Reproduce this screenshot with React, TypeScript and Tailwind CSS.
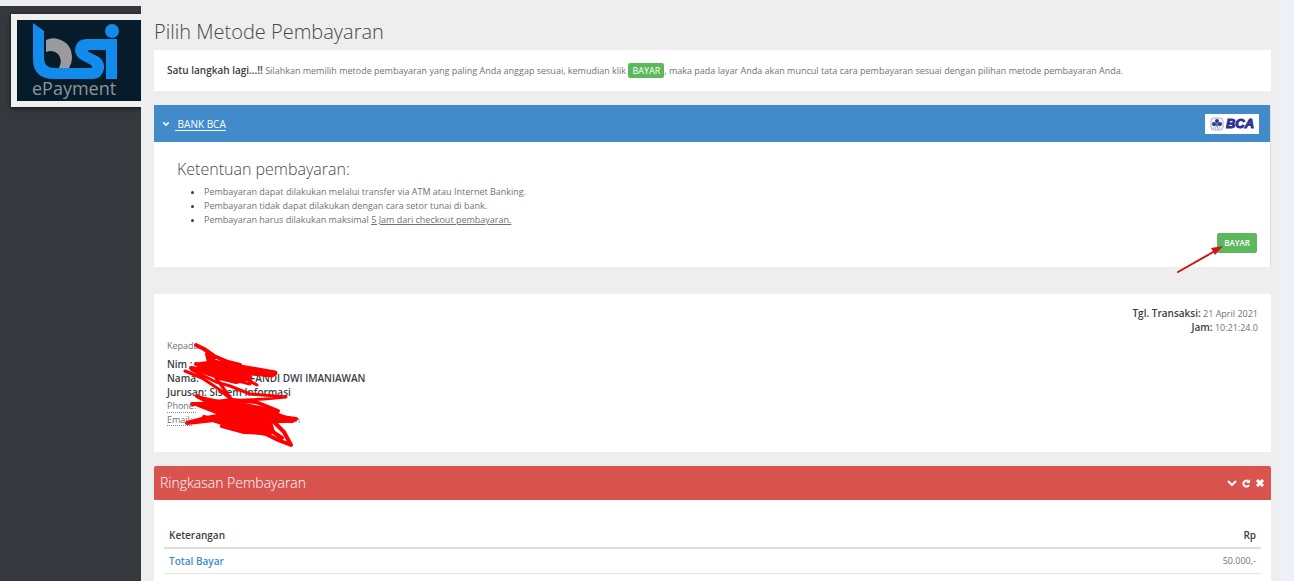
import React from 'react';
import { FaAngleDown } from 'react-icons/fa';

interface PaymentRow {
    label: string;
    amount: string;
}

const rules: { text: string; highlight?: string }[] = [
    { text: 'Pembayaran dapat dilakukan melalui transfer via ATM atau Internet Banking.' },
    { text: 'Pembayaran tidak dapat dilakukan dengan cara setor tunai di bank.' },
    { text: 'Pembayaran harus dilakukan maksimal ', highlight: '5 Jam dari checkout pembayaran.' },
];

const rows: PaymentRow[] = [{ label: 'Total Bayar', amount: '50.000,-' }];

const BsiLogo: React.FC = () => (
    <svg viewBox="0 0 124 81" className="block h-[81px] w-[124px] shrink-0 bg-[#061c2a]" role="img" aria-label="bsi ePayment">
        <path d="M29 20 Q35 17 41 19 Q55 23 55 38 Q55 43 52 48 H42 Q46 40 41 34 Q36 29 29 32Z" fill="#9b9b9d" />
        <path d="M16 3 L27 11 V38 Q27 48 38 48 H73 Q77 48 74 45 L63 39 Q58 35 58 30 Q59 19 70 19 H100 V59 H89 V30 H73 Q69 30 72 32 L82 37 Q88 42 87 49 Q85 59 75 59 H37 Q16 59 16 39Z" fill="#118bec" />
        <circle cx="95" cy="11" r="7" fill="#118bec" />
        <text x="15" y="75" fontSize="18" fontWeight="400" fontFamily="'Open Sans', sans-serif" fill="#8f9498">ePayment</text>
    </svg>
);

const BcaLogo: React.FC = () => (
    <span className="flex h-5 w-[54px] items-center justify-center gap-[2px] bg-white">
        <svg viewBox="0 0 14 14" className="h-[14px] w-[14px]" aria-hidden="true">
            <rect x="1" y="1" width="12" height="12" rx="3" fill="#f4f6fc" stroke="#a3aed8" />
            <circle cx="7" cy="4" r="2" fill="#2b3990" />
            <circle cx="4" cy="7" r="2" fill="#2b3990" />
            <circle cx="10" cy="7" r="2" fill="#2b3990" />
            <path d="M7 5V10M4 9L7 7L10 9" stroke="#2b3990" strokeWidth="1" fill="none" />
            <path d="M3 11H11" stroke="#7b88c0" strokeDasharray="1 1" />
        </svg>
        <span className="font-['Liberation_Sans',sans-serif] text-[13px] leading-none font-bold text-[#2b2f92] italic [-webkit-text-stroke:1px_#2b2f92]">BCA</span>
    </span>
);

const Scribble: React.FC = () => (
    <svg
        viewBox="0 0 140 110"
        className="pointer-events-none absolute top-[46px] left-[26px] h-[110px] w-[140px]"
        fill="none"
        stroke="#fe0000"
        strokeWidth="4"
        strokeLinecap="round"
        strokeLinejoin="round"
        aria-hidden="true"
    >
        <path d="M16 5 L24 9 L34 16 L48 22 L60 25 L40 27 L27 14 L29 22 L46 29 L16 24 L34 31 L11 28 L30 34 L50 36" />
        <path d="M54 26 L72 29 L95 33 L92 35 L72 33 L52 31" strokeWidth="5" />
        <path d="M5 31 L22 38 L40 50 L52 60 M12 30 L36 42 L50 46 L70 54 L106 57 L84 59 L66 60 L42 62 L18 57" strokeWidth="3" />
        <path d="M36 38 L52 60 M58 30 L68 40 L77 45 M40 38 L62 42 L70 44" strokeWidth="3" />
        <path d="M20 24 L36 22 L62 27 L70 38 L56 42 L40 38 L24 32Z" fill="#fe0000" />
        <path d="M17 56 L26 61 L44 65 M12 64 L34 64 L56 66 L80 70 L98 71 L76 62 L52 60 L36 62 L46 70 L18 65 L36 72 L66 76" />
        <path d="M60 72 L94 76 L116 79 L112 81 L84 80 L62 82 L34 80 L7 83 L26 78 L50 74 M24 77 L48 85 L72 88 L90 93 L64 92 L42 86" />
        <path d="M46 80 L64 90 L86 94 L98 100 L111 105 L104 92 L92 80 L68 74 M84 86 L102 98" />
        <path d="M36 64 L60 64 L84 69 L96 74 L112 80 L90 82 L93 92 L78 92 L56 84 L40 78 L50 72Z" fill="#fe0000" />
    </svg>
);

const Arrow: React.FC = () => (
    <svg viewBox="0 0 50 32" className="pointer-events-none absolute right-[45px] bottom-[-7px] h-8 w-[50px]" aria-hidden="true">
        <path d="M3 30L40 9" stroke="#d01316" strokeWidth="2" strokeLinecap="round" />
        <path d="M48 4L40 13L36 6Z" fill="#d01316" />
    </svg>
);

const iconProps = {
    viewBox: '0 0 10 10',
    className: 'block h-[10px] w-[10px]',
    fill: 'none',
    stroke: 'currentColor',
    strokeWidth: 2,
};

export default function App() {
    return (
        <div className="flex min-h-screen bg-[#eeeeee] font-['Open_Sans',sans-serif] text-[9px] leading-[14px] font-normal text-[#707376]">
            <aside className="mt-[6px] w-[141px] shrink-0 overflow-hidden bg-[#35393d] pt-2 pl-[11px]">
                <a href="#" className="flex w-[136px] border-6 border-[#f0f0f0] shadow-[0_1px_4px_#111]">
                    <BsiLogo />
                </a>
            </aside>

            <main className="flex min-w-0 flex-1 flex-col pt-[18px] pr-2 pl-[13px]">
                <h1 className="mb-1 text-[20px] leading-7 font-light text-[#45494d]">Pilih Metode Pembayaran</h1>

                <section className="mb-[14px] bg-white px-[13px] py-[13px]">
                    <p className="leading-[15px]">
                        <strong className="text-[10px] leading-none font-semibold text-[#3a3e42]">Satu langkah lagi...!!</strong> Silahkan memilih metode pembayaran yang paling Anda anggap sesuai, kemudian klik{' '}
                        <span className="inline-block rounded-xs bg-[#5cb85c] px-1 text-white">BAYAR</span>, maka pada layar Anda akan muncul tata cara pembayaran sesuai dengan pilihan metode pembayaran Anda.
                    </p>
                </section>

                {/* Metode pembayaran */}
                <section className="relative mb-[27px] border-r border-[#dddddd] bg-white">
                    <header className="flex h-[37px] items-center justify-between bg-[#428bca] pr-[11px] pl-[7px] text-white">
                        <a href="#bca" className="flex items-center gap-1 text-[10px]">
                            <FaAngleDown className="h-[10px] w-[10px]" />
                            <span className="whitespace-pre underline underline-offset-2"> BANK BCA</span>
                        </a>
                        <BcaLogo />
                    </header>
                    <div id="bca" className="px-[13px] pt-[15px] pb-[14px]">
                        <div className="pl-[10px]">
                            <h2 className="mb-1 text-[16px] leading-6 font-light text-[#45494d]">Ketentuan pembayaran:</h2>
                            <ul className="list-disc pl-[27px] marker:text-[#3a3e42]">
                                {rules.map((rule) => (
                                    <li key={rule.text}>
                                        {rule.text}
                                        {rule.highlight && <u>{rule.highlight}</u>}
                                    </li>
                                ))}
                            </ul>
                        </div>
                        <div className="mt-[6px] flex justify-end">
                            <button type="button" className="h-5 w-10 rounded-xs bg-[#5cb85c] text-[8px] font-semibold text-white">
                                BAYAR
                            </button>
                        </div>
                    </div>
                    <Arrow />
                </section>

                {/* Data mahasiswa */}
                <section className="relative mb-[14px] bg-white px-[13px] pt-[13px] pb-[25px]">
                    <div className="text-right">
                        <p><strong className="text-[10px] leading-none font-semibold text-[#3a3e42]">Tgl. Transaksi:</strong> 21 April 2021</p>
                        <p><strong className="text-[10px] leading-none font-semibold text-[#3a3e42]">Jam:</strong> 10:21:24.0</p>
                    </div>
                    <p className="mt-1 mb-1">Kepada</p>
                    <div className="text-[10px] font-semibold text-[#3a3e42]">
                        <p>Nim :</p>
                        <p className="flex"><span className="w-[83px]">Nama:</span>FANDI DWI IMANIAWAN</p>
                        <p>Jurusan: Sistem Informasi</p>
                    </div>
                    <p><abbr title="Phone" className="border-b border-dotted border-[#888888] no-underline">Phone:</abbr></p>
                    <p className="flex w-[133px] justify-between">
                        <abbr title="Email" className="h-[13px] border-b border-dotted border-[#888888] no-underline">Email:</abbr>
                        <span>m</span>
                    </p>
                    <Scribble />
                </section>

                {/* Ringkasan */}
                <section className="flex-1 rounded-t-xs bg-white">
                    <header className="flex h-[34px] items-center justify-between rounded-t-xs bg-[#d9534f] px-[6px] text-white">
                        <h2 className="text-[14px] font-light">Ringkasan Pembayaran</h2>
                        <div className="flex gap-1">
                            <button type="button" aria-label="Ciutkan">
                                <svg {...iconProps}><path d="M1 3L5 7L9 3" /></svg>
                            </button>
                            <button type="button" aria-label="Muat ulang">
                                <svg {...iconProps}><path d="M8 7A3 3 0 1 1 7 3" /><path d="M9 1V5H5Z" fill="currentColor" stroke="none" /></svg>
                            </button>
                            <button type="button" aria-label="Tutup">
                                <svg {...iconProps}><path d="M2 2L8 8M8 2L2 8" strokeWidth="3" /></svg>
                            </button>
                        </div>
                    </header>
                    <div className="px-[10px] pt-[23px]">
                        <table className="w-full">
                            <thead>
                                <tr className="border-b-2 border-[#dddddd] text-[10px] text-[#3a3e42]">
                                    <th className="px-[5px] pt-[5px] pb-[5px] text-left font-semibold">Keterangan</th>
                                    <th className="px-[5px] pt-[5px] pb-[5px] text-right font-semibold">Rp</th>
                                </tr>
                            </thead>
                            <tbody>
                                {rows.map((row) => (
                                    <tr key={row.label} className="border-b border-[#e5e5e5]">
                                        <td className="px-[5px] py-[5px] text-[10px] font-semibold text-[#428bca]">{row.label}</td>
                                        <td className="px-[5px] py-[5px] text-right">{row.amount}</td>
                                    </tr>
                                ))}
                            </tbody>
                        </table>
                    </div>
                </section>
            </main>

            <div className="w-[15px] shrink-0 bg-[#ebf0f9]" />
        </div>
    );
}
